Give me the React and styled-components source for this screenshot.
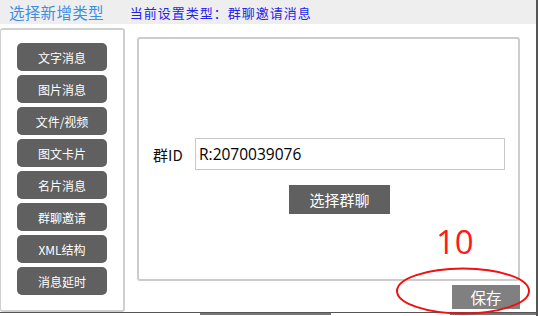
import React from 'react';
import styled, { createGlobalStyle } from 'styled-components';

const GlobalStyle = createGlobalStyle`
  html, body {
    margin: 0;
    padding: 0;
    background: #ffffff;
  }
  body {
    font-family: "Microsoft YaHei", "Noto Sans CJK SC", sans-serif;
  }
`;

const Window = styled.div`
  position: relative;
  width: 538px;
  height: 316px;
  box-sizing: border-box;
  border-right: 2px solid #555;
  overflow: hidden;
  display: flex;
  flex-direction: column;
`;

const Header = styled.div`
  height: 25px;
  background: #eeeeee;
  display: flex;
  align-items: center;
  padding-left: 9px;
  gap: 26px;
`;

const Title = styled.span`
  font-size: 15.5px;
  color: #3d8fe2;
  letter-spacing: 0.3px;
`;

const SubTitle = styled.span`
  font-size: 13px;
  color: #2323ec;
  letter-spacing: 1px;
`;

const Body = styled.div`
  display: flex;
  padding-top: 4px;
  height: 284px;
`;

const SidePanel = styled.div`
  width: 125px;
  height: 284px;
  box-sizing: border-box;
  border: 2px solid #cfcfcf;
  border-left-width: 1px;
  border-radius: 3px;
  display: flex;
  flex-direction: column;
  align-items: center;
  padding-top: 13px;
  gap: 4px;
`;

const TypeButton = styled.button`
  width: 90px;
  height: 28px;
  border: none;
  border-radius: 5px;
  background: #606060;
  color: #ffffff;
  font-family: inherit;
  font-size: 12px;
  padding: 0;
  cursor: pointer;
`;

const MainCol = styled.div`
  margin-left: 12px;
  margin-top: 9px;
  width: 383px;
  display: flex;
  flex-direction: column;
`;

const ContentPanel = styled.div`
  height: 244px;
  box-sizing: border-box;
  border: 2px solid #cccccc;
  border-radius: 3px;
  padding: 99px 13px 0 14px;
  display: flex;
  flex-direction: column;
`;

const FieldRow = styled.div`
  display: flex;
  align-items: center;
  gap: 8px;
`;

const FieldLabel = styled.label`
  font-size: 15px;
  color: #111;
  width: 34px;
`;

const FieldInput = styled.div`
  flex: 1;
  height: 32px;
  box-sizing: border-box;
  border: 1px solid #c8c8c8;
  display: flex;
  align-items: center;
  padding-left: 3px;
  font-size: 15.5px;
  color: #000;
  font-family: "Segoe UI", "Open Sans", "Noto Sans CJK SC", sans-serif;
`;

const PickButton = styled.button`
  align-self: flex-start;
  margin-left: 136px;
  margin-top: 15px;
  width: 101px;
  height: 29px;
  border: none;
  background: #606060;
  color: #ffffff;
  font-family: inherit;
  font-size: 15px;
  padding: 0;
`;

const Footer = styled.div`
  display: flex;
  justify-content: flex-end;
  margin-top: 4px;
`;

const SaveButton = styled.button`
  width: 68px;
  height: 24px;
  border: none;
  background: #808080;
  color: #ffffff;
  font-family: inherit;
  font-size: 15.5px;
  padding: 0;
`;

const BottomEdge = styled.div`
  margin-top: auto;
  height: 3px;
  border-top: 1px solid #555;
  display: flex;
`;

const PeekBar = styled.div`
  height: 2px;
  margin-left: ${p => p.$left}px;
  width: ${p => p.$width}px;
  background: #777;
`;

const Note = styled.span`
  position: absolute;
  left: 436px;
  top: 222px;
  font-family: "Segoe UI", "Open Sans", sans-serif;
  font-size: 33px;
  line-height: 40px;
  color: #ff1a1a;
`;

const Mark = styled.svg`
  position: absolute;
  left: 395px;
  top: 266px;
  pointer-events: none;
`;

const types = ['文字消息', '图片消息', '文件/视频', '图文卡片', '名片消息', '群聊邀请', 'XML结构', '消息延时'];

export default function App() {
  return (
    <>
      <GlobalStyle />
      <Window>
        <Header>
          <Title>选择新增类型</Title>
          <SubTitle>当前设置类型：群聊邀请消息</SubTitle>
        </Header>
        <Body>
          <SidePanel>
            {types.map(t => (
              <TypeButton key={t}>{t}</TypeButton>
            ))}
          </SidePanel>
          <MainCol>
            <ContentPanel>
              <FieldRow>
                <FieldLabel>群ID</FieldLabel>
                <FieldInput>R:2070039076</FieldInput>
              </FieldRow>
              <PickButton>选择群聊</PickButton>
            </ContentPanel>
            <Footer>
              <SaveButton>保存</SaveButton>
            </Footer>
          </MainCol>
        </Body>
        <BottomEdge>
          <PeekBar $left={200} $width={131} />
          <PeekBar $left={119} $width={86} />
        </BottomEdge>
        <Note>10</Note>
        <Mark width="140" height="50" viewBox="0 0 140 50">
          <ellipse cx="68" cy="25" rx="66" ry="22.5" fill="none" stroke="#f01010" strokeWidth="2" />
        </Mark>
      </Window>
    </>
  );
}
